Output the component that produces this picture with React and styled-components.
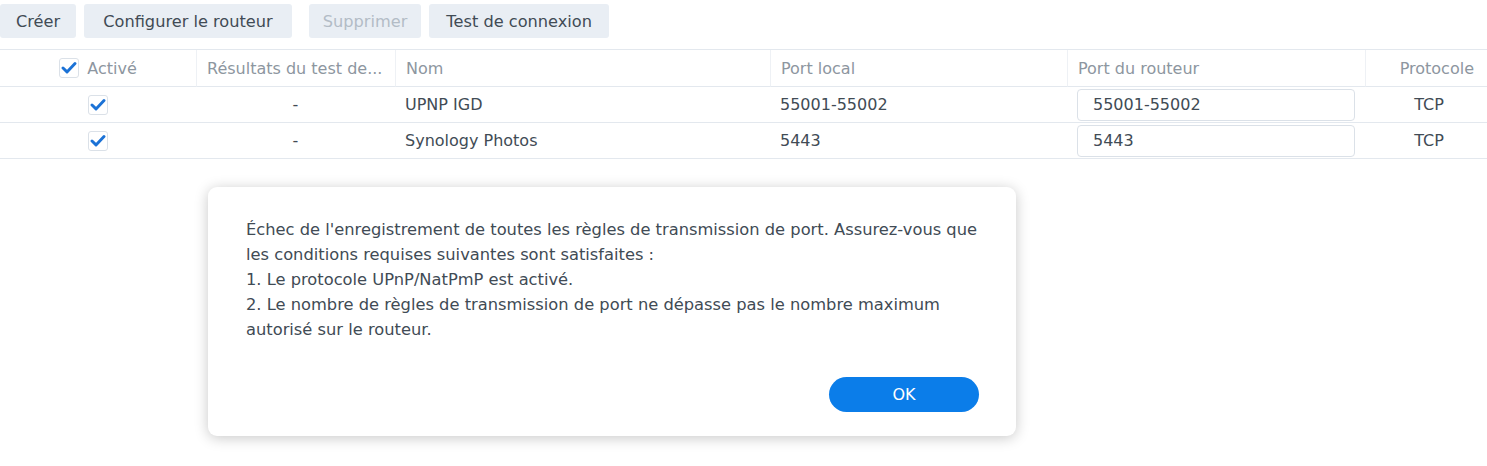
import React from "react";
import styled, { createGlobalStyle } from "styled-components";

const GlobalStyle = createGlobalStyle`
	html, body {
		margin: 0;
		padding: 0;
		background: #ffffff;
	}
	body {
		font-family: "DejaVu Sans", Verdana, sans-serif;
		color: #414b55;
	}
`;

const Page = styled.div`
	width: 1487px;
	height: 466px;
	overflow: hidden;
	position: relative;
	background: #fff;
`;

const Toolbar = styled.div`
	display: flex;
	gap: 8px;
	padding: 4px 0 0 0;
	height: 49px;
	box-sizing: border-box;
`;

const ToolButton = styled.button`
	height: 34px;
	padding: 0 ${(p) => p.px || 17}px;
	border: none;
	border-radius: 3px;
	background: #e9eef4;
	font-family: "DejaVu Sans", Verdana, sans-serif;
	font-size: 16.2px;
	color: ${(p) => (p.disabled ? "#b3bcc6" : "#414b55")};
	margin-right: ${(p) => p.gap || 0}px;
`;

const Table = styled.div`
	border-top: 1px solid #e3e8ee;
	display: grid;
	grid-template-columns: 196px 199px 375px 297px 298px 122px;
`;

const HeadCell = styled.div`
	height: 37px;
	display: flex;
	align-items: center;
	justify-content: ${(p) => p.align || "flex-start"};
	padding: 0 ${(p) => p.pr || 10}px 0 10px;
	box-sizing: border-box;
	border-bottom: 1px solid #e3e8ee;
	border-left: ${(p) => (p.first ? "none" : "1px solid #eef1f5")};
	font-size: 16px;
	color: #8d96a0;
	white-space: nowrap;
	gap: 8px;
`;

const Cell = styled.div`
	height: 36px;
	display: flex;
	align-items: center;
	justify-content: ${(p) => p.align || "flex-start"};
	padding: 0 10px;
	box-sizing: border-box;
	border-bottom: 1px solid #e3e8ee;
	font-size: 16px;
	color: #414b55;
	white-space: nowrap;
`;

const Box = styled.span`
	width: 20px;
	height: 20px;
	border: 1px solid #dbe1e8;
	border-radius: 3px;
	display: inline-flex;
	align-items: center;
	justify-content: center;
	background: #fff;
	box-sizing: border-box;
`;

const PortInput = styled.div`
	width: 278px;
	height: 32px;
	border: 1px solid #dbe1e8;
	border-radius: 4px;
	box-sizing: border-box;
	display: flex;
	align-items: center;
	padding-left: 15px;
`;

const Dialog = styled.div`
	position: absolute;
	left: 208px;
	top: 187px;
	width: 808px;
	height: 249px;
	background: #fff;
	border-radius: 9px;
	box-shadow: 0 2px 14px rgba(0, 0, 0, 0.22);
	box-sizing: border-box;
	padding: 30px 30px 24px 38px;
	display: flex;
	flex-direction: column;
`;

const Message = styled.div`
	font-size: 16.3px;
	line-height: 25px;
	color: #414b55;
	flex: 1;
`;

const Footer = styled.div`
	display: flex;
	justify-content: flex-end;
	padding-right: 7px;
`;

const OkButton = styled.button`
	width: 150px;
	height: 35px;
	border: none;
	border-radius: 18px;
	background: #0b7de9;
	color: #fff;
	font-family: "DejaVu Sans", Verdana, sans-serif;
	font-size: 16px;
`;

const Check = () => (
	<svg width="16" height="14" viewBox="0 0 16 14">
		<path
			d="M2 7 L6 10.9 L14 2.6"
			fill="none"
			stroke="#1b72d6"
			strokeWidth="2.9"
			strokeLinecap="round"
			strokeLinejoin="round"
		/>
	</svg>
);

const rows = [
	{ name: "UPNP IGD", local: "55001-55002", router: "55001-55002" },
	{ name: "Synology Photos", local: "5443", router: "5443" },
];

export default function App() {
	return (
		<Page>
			<GlobalStyle />
			<Toolbar>
				<ToolButton px={16}>Créer</ToolButton>
				<ToolButton px={19} gap={9}>
					Configurer le routeur
				</ToolButton>
				<ToolButton px={14} disabled>
					Supprimer
				</ToolButton>
				<ToolButton px={17}>Test de connexion</ToolButton>
			</Toolbar>
			<Table>
				<HeadCell first align="center">
					<Box>
						<Check />
					</Box>
					Activé
				</HeadCell>
				<HeadCell>Résultats du test de...</HeadCell>
				<HeadCell>Nom</HeadCell>
				<HeadCell>Port local</HeadCell>
				<HeadCell>Port du routeur</HeadCell>
				<HeadCell align="flex-end" pr={13}>
					Protocole
				</HeadCell>
				{rows.map((r) => (
					<React.Fragment key={r.name}>
						<Cell align="center">
							<Box>
								<Check />
							</Box>
						</Cell>
						<Cell align="center">-</Cell>
						<Cell>{r.name}</Cell>
						<Cell>{r.local}</Cell>
						<Cell>
							<PortInput>{r.router}</PortInput>
						</Cell>
						<Cell align="center" style={{ paddingLeft: 16 }}>
							TCP
						</Cell>
					</React.Fragment>
				))}
			</Table>
			<Dialog>
				<Message>
					Échec de l'enregistrement de toutes les règles de transmission de port. Assurez-vous que
					les conditions requises suivantes sont satisfaites :
					<br />
					1. Le protocole UPnP/NatPmP est activé.
					<br />
					2. Le nombre de règles de transmission de port ne dépasse pas le nombre maximum
					autorisé sur le routeur.
				</Message>
				<Footer>
					<OkButton>OK</OkButton>
				</Footer>
			</Dialog>
		</Page>
	);
}
